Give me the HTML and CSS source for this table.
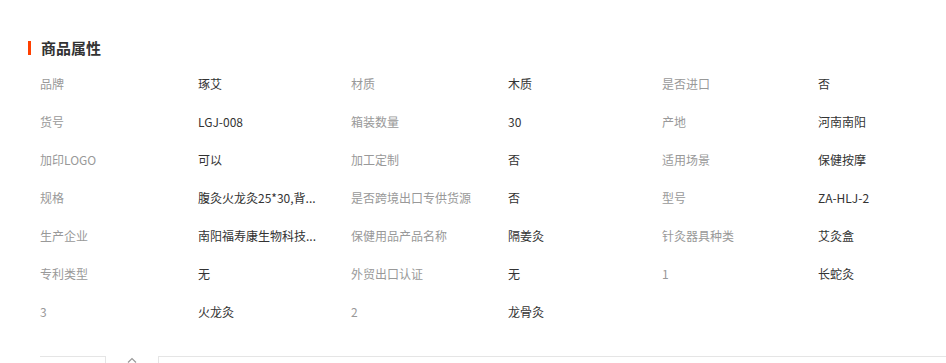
FILE: index.html
```html
<!DOCTYPE html>
<html lang="zh-CN">
<head>
<meta charset="utf-8">
<title>商品属性</title>
<link rel="stylesheet" href="styles.css">
</head>
<body>
<div class="page">
  <h2 class="title"><span class="bar"></span>商品属性</h2>
  <div class="attrs">
    <div class="k">品牌</div><div class="v">琢艾</div>
    <div class="k">材质</div><div class="v">木质</div>
    <div class="k">是否进口</div><div class="v">否</div>

    <div class="k">货号</div><div class="v">LGJ-008</div>
    <div class="k">箱装数量</div><div class="v">30</div>
    <div class="k">产地</div><div class="v">河南南阳</div>

    <div class="k">加印LOGO</div><div class="v">可以</div>
    <div class="k">加工定制</div><div class="v">否</div>
    <div class="k">适用场景</div><div class="v">保健按摩</div>

    <div class="k">规格</div><div class="v" title="腹灸火龙灸25*30,背部火龙灸">腹灸火龙灸25*30,背...</div>
    <div class="k">是否跨境出口专供货源</div><div class="v">否</div>
    <div class="k">型号</div><div class="v">ZA-HLJ-2</div>

    <div class="k">生产企业</div><div class="v" title="南阳福寿康生物科技有限公司">南阳福寿康生物科技...</div>
    <div class="k">保健用品产品名称</div><div class="v">隔姜灸</div>
    <div class="k">针灸器具种类</div><div class="v">艾灸盒</div>

    <div class="k">专利类型</div><div class="v">无</div>
    <div class="k">外贸出口认证</div><div class="v">无</div>
    <div class="k num">1</div><div class="v">长蛇灸</div>

    <div class="k num">3</div><div class="v">火龙灸</div>
    <div class="k num">2</div><div class="v">龙骨灸</div>
  </div>
  <div class="tabs">
    <div class="tab-left"></div>
    <div class="tab-toggle">
      <svg width="10" height="6" viewBox="0 0 10 6"><polyline points="1,5.5 5,1.5 9,5.5" fill="none" stroke="#999" stroke-width="1.2"/></svg>
    </div>
    <div class="tab-right"></div>
  </div>
</div>
</body>
</html>
```
FILE: styles.css
```css
* { box-sizing: border-box; }
html, body { margin: 0; padding: 0; background: #fff; }
body {
  font-family: "Microsoft YaHei", "Noto Sans CJK SC", "Noto Sans", sans-serif;
  font-size: 12px;
  color: #333;
  width: 946px;
  height: 363px;
  overflow: hidden;
}
.page { padding-top: 38px; }
.title {
  margin: 0 0 7px 28px;
  height: 20px;
  line-height: 20px;
  font-size: 15px;
  font-weight: bold;
  color: #333;
  display: flex;
  align-items: center;
}
.bar {
  display: inline-block;
  width: 3px;
  height: 14px;
  background: #ff4000;
  margin-right: 10px;
}
.attrs {
  display: grid;
  grid-template-columns: 158px 153px 157px 154px 156px 128px;
  grid-auto-rows: 38px;
  margin-left: 40px;
}
.k, .v {
  line-height: 38px;
  white-space: nowrap;
}
.k { color: #999; }
.v { color: #333; }
.num { color: #999; }
.tabs {
  display: flex;
  margin-top: 25px;
  margin-left: 40px;
  height: 10px;
}
.tab-left {
  width: 66px;
  border-top: 1px solid #e5e5e5;
  border-right: 1px solid #e5e5e5;
}
.tab-toggle {
  width: 52px;
  display: flex;
  justify-content: center;
  padding-top: 1px;
}
.tab-right {
  flex: 1;
  border-top: 1px solid #e5e5e5;
  border-left: 1px solid #e5e5e5;
}
```
